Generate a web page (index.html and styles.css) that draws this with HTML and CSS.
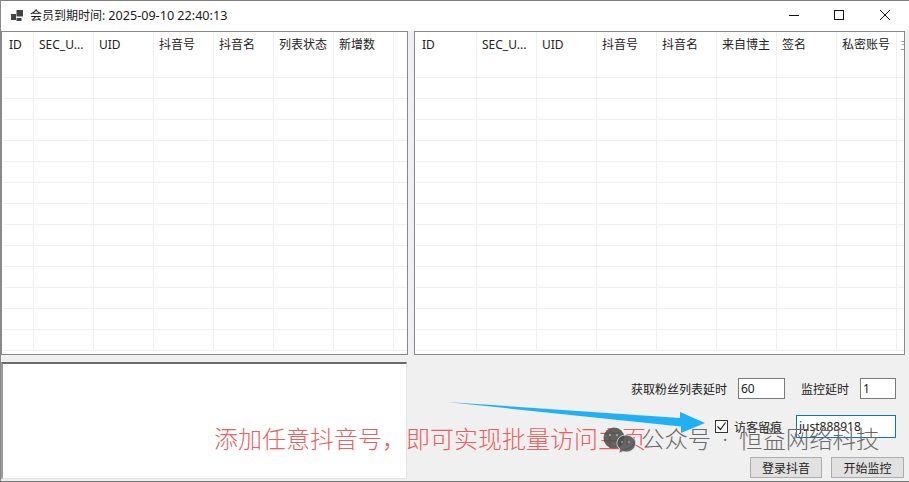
FILE: index.html
```html
<!DOCTYPE html>
<html lang="zh-CN">
<head>
<meta charset="utf-8">
<title>会员到期时间</title>
<link rel="stylesheet" href="styles.css">
</head>
<body>
<div class="window">
  <header class="titlebar">
    <svg class="app-icon" width="12" height="11" viewBox="0 0 12 11"><path fill="#444" d="M0 4h5v6H0zM5.5 0h6.5v6.5H5.500zM5.500 8h5v3h-5z"/></svg>
    <span class="title">会员到期时间: <span class="stamp">2025-09-10 22:40:13</span></span>
    <div class="winbtns">
      <svg width="46" height="30" viewBox="0 0 46 30"><path stroke="#111" fill="none" d="M18 14.500h10"/></svg>
      <svg width="46" height="30" viewBox="0 0 46 30"><rect x="17.500" y="9.500" width="9" height="9" stroke="#111" fill="none"/></svg>
      <svg width="46" height="30" viewBox="0 0 46 30"><path stroke="#111" fill="none" d="M17 9l10 10M27 9L17 19"/></svg>
    </div>
  </header>
  <main class="grids">
    <section class="grid grid-left">
      <div class="row head"><span class="c first">ID</span><span class="c">SEC_U...</span><span class="c">UID</span><span class="c">抖音号</span><span class="c">抖音名</span><span class="c">列表状态</span><span class="c">新增数</span><span class="c"></span></div>
      <div class="row"><i></i><i></i><i></i><i></i><i></i><i></i><i></i><i></i></div>
      <div class="row"><i></i><i></i><i></i><i></i><i></i><i></i><i></i><i></i></div>
      <div class="row"><i></i><i></i><i></i><i></i><i></i><i></i><i></i><i></i></div>
      <div class="row"><i></i><i></i><i></i><i></i><i></i><i></i><i></i><i></i></div>
      <div class="row"><i></i><i></i><i></i><i></i><i></i><i></i><i></i><i></i></div>
      <div class="row"><i></i><i></i><i></i><i></i><i></i><i></i><i></i><i></i></div>
      <div class="row"><i></i><i></i><i></i><i></i><i></i><i></i><i></i><i></i></div>
      <div class="row"><i></i><i></i><i></i><i></i><i></i><i></i><i></i><i></i></div>
      <div class="row"><i></i><i></i><i></i><i></i><i></i><i></i><i></i><i></i></div>
      <div class="row"><i></i><i></i><i></i><i></i><i></i><i></i><i></i><i></i></div>
      <div class="row"><i></i><i></i><i></i><i></i><i></i><i></i><i></i><i></i></div>
      <div class="row"><i></i><i></i><i></i><i></i><i></i><i></i><i></i><i></i></div>
      <div class="row"><i></i><i></i><i></i><i></i><i></i><i></i><i></i><i></i></div>
      <div class="row"><i></i><i></i><i></i><i></i><i></i><i></i><i></i><i></i></div>
    </section>
    <section class="grid grid-right">
      <div class="row head"><span class="c first">ID</span><span class="c">SEC_U...</span><span class="c">UID</span><span class="c">抖音号</span><span class="c">抖音名</span><span class="c">来自博主</span><span class="c">签名</span><span class="c">私密账号</span><span class="c last">主</span></div>
      <div class="row"><i></i><i></i><i></i><i></i><i></i><i></i><i></i><i></i><i></i></div>
      <div class="row"><i></i><i></i><i></i><i></i><i></i><i></i><i></i><i></i><i></i></div>
      <div class="row"><i></i><i></i><i></i><i></i><i></i><i></i><i></i><i></i><i></i></div>
      <div class="row"><i></i><i></i><i></i><i></i><i></i><i></i><i></i><i></i><i></i></div>
      <div class="row"><i></i><i></i><i></i><i></i><i></i><i></i><i></i><i></i><i></i></div>
      <div class="row"><i></i><i></i><i></i><i></i><i></i><i></i><i></i><i></i><i></i></div>
      <div class="row"><i></i><i></i><i></i><i></i><i></i><i></i><i></i><i></i><i></i></div>
      <div class="row"><i></i><i></i><i></i><i></i><i></i><i></i><i></i><i></i><i></i></div>
      <div class="row"><i></i><i></i><i></i><i></i><i></i><i></i><i></i><i></i><i></i></div>
      <div class="row"><i></i><i></i><i></i><i></i><i></i><i></i><i></i><i></i><i></i></div>
      <div class="row"><i></i><i></i><i></i><i></i><i></i><i></i><i></i><i></i><i></i></div>
      <div class="row"><i></i><i></i><i></i><i></i><i></i><i></i><i></i><i></i><i></i></div>
      <div class="row"><i></i><i></i><i></i><i></i><i></i><i></i><i></i><i></i><i></i></div>
      <div class="row"><i></i><i></i><i></i><i></i><i></i><i></i><i></i><i></i><i></i></div>
    </section>
  </main>
  <div class="bottom">
    <div class="log"></div>
    <div class="controls">
      <div class="ctl-row ctl-delay">
        <label class="lbl">获取粉丝列表延时</label>
        <input class="field f-list" value="60">
        <label class="lbl lbl-mon">监控延时</label>
        <input class="field f-mon" value="1">
      </div>
      <div class="ctl-row ctl-visit">
        <span class="check"><svg width="11" height="11" viewBox="0 0 11 11"><path d="M1.500 5.500l3 3 5-7" fill="none" stroke="#222" stroke-width="1.200"/></svg></span>
        <label class="lbl lbl-visit">访客留痕</label>
        <input class="field f-user" value="just888918">
      </div>
      <div class="ctl-row ctl-btns">
        <button class="btn">登录抖音</button>
        <button class="btn">开始监控</button>
      </div>
    </div>
  </div>
  <svg class="arrow" width="270" height="40" viewBox="0 0 270 40"><path fill="#1fb0f5" d="M0 2L233 18 233 12 258 23 234 33 234 26.500Z"/></svg>
  <div class="note">添加任意抖音号，即可实现批量访问主页</div>
  <div class="mark">
    <svg width="34" height="26" viewBox="0 0 34 26"><circle cx="12" cy="11" r="10.500" fill="#4d4d4d" fill-opacity=".88"/><path fill="#4d4d4d" fill-opacity=".85" stroke="#ddd" stroke-width=".8" d="M24 8a9.500 8.500 0 1 1-3 16.500L17 26l1-4a9 8 0 0 1 6-14z"/><circle cx="8" cy="8" r="1.200" fill="#999"/><circle cx="15" cy="8" r="1.200" fill="#999"/><circle cx="20" cy="15" r="1" fill="#999"/><circle cx="27" cy="15" r="1" fill="#999"/></svg>
    <span class="mark-text">公众号 · 恒益网络科技</span>
  </div>
</div>
</body>
</html>
```
FILE: styles.css
```css
* { box-sizing: border-box; }
html, body { margin: 0; height: 100%; }
body { width: 909px; height: 482px; overflow: hidden; background: #f0f0f0; font-family: "Noto Sans", "Noto Sans CJK SC", sans-serif; font-size: 12px; color: #1a1a1a; }
.window { position: relative; width: 909px; height: 482px; display: flex; flex-direction: column; border-top: 1px solid #7f7f7f; border-left: 1px solid #8a8a8a; border-bottom: 1px solid #777; background: #f0f0f0; overflow: hidden; }
.window::before { content: ""; position: absolute; top: -1px; left: 712px; width: 197px; height: 1px; background: #2a4f70; }
.titlebar { height: 30px; flex: none; display: flex; align-items: center; background: #fff; padding-left: 10px; }
.app-icon { flex: none; margin-top: -1px; }
.title { margin-left: 7px; font-size: 12px; line-height: 16px; margin-top: -1px; }
.stamp { font-size: 12.6px; }
.winbtns { margin-left: auto; display: flex; }
.winbtns svg { display: block; }
.grids { height: 330px; flex: none; display: flex; gap: 6px; background: #f0f0f0; }
.grid { height: 324px; background: #fff; border: 1px solid #85888c; overflow: hidden; padding-left: 1px; }
.grid-left { width: 407px; }
.grid-right { width: 491px; }
.row { display: flex; height: 21px; border-bottom: 1px solid #f0f0f0; }
.row i { display: block; width: 60px; flex: none; border-right: 1px solid #f0f0f0; }
.row i:first-child { width: 31px; }
.grid-right .row i:first-child { width: 61px; }
.grid-right .row i:last-child { width: 8px; }
.grid-left .row i:last-child { width: 14px; }
.head { height: 25px; border-bottom: 0; align-items: center; }
.c { display: block; width: 60px; flex: none; height: 25px; line-height: 25px; padding-left: 5px; border-right: 1px solid #f0f0f0; white-space: nowrap; overflow: hidden; color: #222; }
.c.first { width: 31px; padding-left: 6px; }
.grid-right .c.first { width: 61px; }
.c.last { width: 8px; padding-left: 3px; color: #999; border-right: 0; }
.grid-left .c:last-child { width: 14px; }
.bottom { flex: 1; display: flex; min-height: 0; padding-top: 1px; }
.log { width: 406px; height: 117px; background: #fff; border-top: 2px solid #6a6a6a; border-left: 2px solid #9a9a9a; border-right: 1px solid #e3e3e3; border-bottom: 1px solid #e3e3e3; }
.controls { flex: 1; position: relative; display: flex; flex-direction: column; align-items: stretch; min-width: 0; padding-top: 16px; }
.ctl-row { display: flex; align-items: center; justify-content: flex-end; }
.ctl-delay { height: 21px; padding-right: 13px; }
.ctl-visit { height: 23px; margin-top: 16px; padding-right: 13px; }
.ctl-btns { margin-top: 19px; height: 21px; gap: 9px; padding-right: 5px; }
.lbl { font-size: 12px; white-space: nowrap; color: #222; }
.field { font: inherit; color: #222; background: #fff; border: 1px solid #7a7a7a; height: 21px; padding: 0 2px; outline: 0; }
.f-list { width: 47px; margin-left: 11px; }
.lbl-mon { margin-left: 16px; }
.f-mon { width: 36px; margin-left: 11px; }
.check { width: 13px; height: 13px; border: 1px solid #333; background: #fff; display: flex; align-items: center; justify-content: center; }
.lbl-visit { margin-left: 6px; }
.f-user { width: 100px; height: 23px; margin-left: 14px; border-color: #0a78b4; }
.btn { width: 72px; height: 21px; padding: 0; font: inherit; color: #222; background: #e1e1e1; border: 1px solid #adadad; border-radius: 0; }
.btn:last-child { width: 73px; }
.arrow { position: absolute; left: 446px; top: 399px; }
.note { position: absolute; left: 213px; top: 420px; font-size: 24px; line-height: 34px; color: #e8605f; white-space: nowrap; font-family: "Noto Sans CJK SC", sans-serif; font-weight: 300; }
.mark { position: absolute; left: 601px; top: 426px; display: flex; align-items: center; gap: 5px; color: #6a6a6a; font-size: 23.4px; line-height: 28px; white-space: nowrap; font-family: "Noto Sans", "Noto Sans CJK SC", sans-serif; font-weight: 300; word-spacing: 5px; }
.mark-text { margin-top: -3px; }
```
